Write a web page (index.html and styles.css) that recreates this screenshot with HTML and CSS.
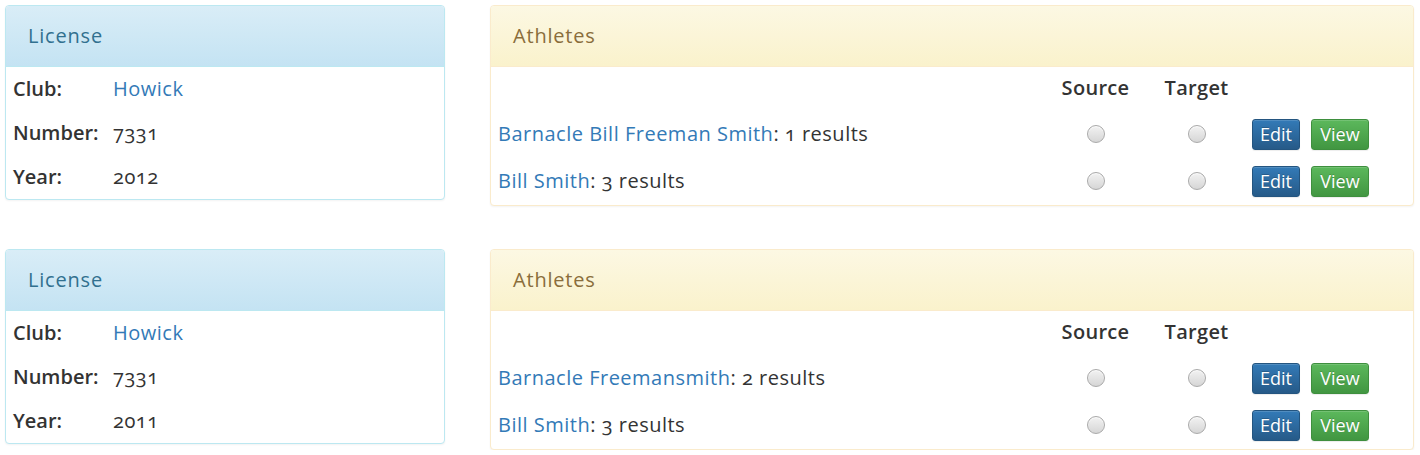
FILE: index.html
```html
<!DOCTYPE html>
<html>
<head>
<meta charset="utf-8">
<link rel="stylesheet" href="styles.css">
</head>
<body>
<div class="page">
  <div class="row">
    <div class="panel panel-info license">
      <div class="panel-heading">License</div>
      <div class="panel-body">
        <div class="kv"><span class="k">Club:</span><a class="v link" href="#">Howick</a></div>
        <div class="kv"><span class="k">Number:</span><span class="v num">7331</span></div>
        <div class="kv"><span class="k">Year:</span><span class="v num">2012</span></div>
      </div>
    </div>
    <div class="panel panel-warning athletes">
      <div class="panel-heading">Athletes</div>
      <div class="table">
        <div class="tr head">
          <div class="td name"></div>
          <div class="td radio-col">Source</div>
          <div class="td radio-col">Target</div>
          <div class="td actions"></div>
        </div>
        <div class="tr">
          <div class="td name"><a class="link" href="#">Barnacle Bill Freeman Smith</a>: <span class="num">1</span> results</div>
          <div class="td radio-col"><input type="radio" name="s1" class="radio"></div>
          <div class="td radio-col"><input type="radio" name="t1" class="radio"></div>
          <div class="td actions"><span class="btn btn-primary">Edit</span><span class="btn btn-success">View</span></div>
        </div>
        <div class="tr">
          <div class="td name"><a class="link" href="#">Bill Smith</a>: <span class="num">3</span> results</div>
          <div class="td radio-col"><input type="radio" name="s1" class="radio"></div>
          <div class="td radio-col"><input type="radio" name="t1" class="radio"></div>
          <div class="td actions"><span class="btn btn-primary">Edit</span><span class="btn btn-success">View</span></div>
        </div>
      </div>
    </div>
  </div>
  <div class="row">
    <div class="panel panel-info license">
      <div class="panel-heading">License</div>
      <div class="panel-body">
        <div class="kv"><span class="k">Club:</span><a class="v link" href="#">Howick</a></div>
        <div class="kv"><span class="k">Number:</span><span class="v num">7331</span></div>
        <div class="kv"><span class="k">Year:</span><span class="v num">2011</span></div>
      </div>
    </div>
    <div class="panel panel-warning athletes">
      <div class="panel-heading">Athletes</div>
      <div class="table">
        <div class="tr head">
          <div class="td name"></div>
          <div class="td radio-col">Source</div>
          <div class="td radio-col">Target</div>
          <div class="td actions"></div>
        </div>
        <div class="tr">
          <div class="td name"><a class="link" href="#">Barnacle Freemansmith</a>: <span class="num">2</span> results</div>
          <div class="td radio-col"><input type="radio" name="s2" class="radio"></div>
          <div class="td radio-col"><input type="radio" name="t2" class="radio"></div>
          <div class="td actions"><span class="btn btn-primary">Edit</span><span class="btn btn-success">View</span></div>
        </div>
        <div class="tr">
          <div class="td name"><a class="link" href="#">Bill Smith</a>: <span class="num">3</span> results</div>
          <div class="td radio-col"><input type="radio" name="s2" class="radio"></div>
          <div class="td radio-col"><input type="radio" name="t2" class="radio"></div>
          <div class="td actions"><span class="btn btn-primary">Edit</span><span class="btn btn-success">View</span></div>
        </div>
      </div>
    </div>
  </div>
</div>
</body>
</html>
```

FILE: styles.css
```css
* { box-sizing: border-box; }
html, body { margin: 0; padding: 0; background: #fff; }
body {
  font-family: "Open Sans", "Liberation Sans", sans-serif;
  font-size: 20px;
  color: #333;
  letter-spacing: 0.5px;
}
.page {
  padding: 5px 6px 0 5px;
  display: flex;
  flex-direction: column;
  gap: 43px;
}
.row {
  display: flex;
  align-items: flex-start;
  gap: 45px;
}
.panel {
  border: 1px solid;
  border-radius: 4px;
  box-shadow: 0 1px 2px rgba(0,0,0,.05);
  background: #fff;
  overflow: hidden;
}
.panel-heading {
  height: 61px;
  padding: 0 22px 2px;
  display: flex;
  align-items: center;
  border-bottom: 1px solid transparent;
  font-size: 20px;
  letter-spacing: 0.8px;
}
.panel-info { border-color: #bce8f1; }
.panel-info .panel-heading {
  color: #31708f;
  background: linear-gradient(to bottom, #d9edf7 0, #c4e3f3 100%);
  border-bottom-color: #bce8f1;
}
.panel-warning { border-color: #faebcc; }
.panel-warning .panel-heading {
  color: #8a6d3b;
  background: linear-gradient(to bottom, #fcf8e3 0, #faf2cc 100%);
  border-bottom-color: #faebcc;
}
.license { width: 440px; }
.athletes { width: 924px; }
.kv {
  height: 44px;
  display: flex;
  align-items: center;
  padding: 0 0 2px 7px;
}
.k { width: 100px; font-weight: 600; letter-spacing: 0; }
.num { font-variant-numeric: oldstyle-nums; font-size: 20px; }
.link { color: #337ab7; text-decoration: none; }
.table { display: flex; flex-direction: column; }
.tr {
  display: flex;
  align-items: center;
  height: 47px;
}
.td.name { flex: 1; padding: 0 0 2px 7px; }
.tr.head { height: 44px; font-weight: 600; letter-spacing: 0.3px; }
.tr.head .td { padding-bottom: 3px; }
.td.radio-col { width: 101px; display: flex; justify-content: center; }
.td.actions { width: 166px; padding-left: 5px; display: flex; gap: 11px; }
.radio {
  appearance: none;
  -webkit-appearance: none;
  margin: 0;
  width: 18px;
  height: 18px;
  border-radius: 50%;
  border: 1px solid #a9a9a9;
  background: linear-gradient(to bottom, #f2f2f2 0, #d6d6d6 100%);
  box-shadow: inset 0 1px 1px rgba(255,255,255,.8);
  position: relative;
  top: -1px;
}
.btn {
  display: inline-flex;
  align-items: center;
  justify-content: center;
  height: 31px;
  padding: 0 0 1px;
  font-size: 18px;
  letter-spacing: 0;
  color: #fff;
  border: 1px solid;
  border-radius: 3px;
  text-shadow: 0 -1px 0 rgba(0,0,0,.2);
  box-shadow: inset 0 1px 0 rgba(255,255,255,.15), 0 1px 1px rgba(0,0,0,.075);
}
.btn-primary {
  width: 48px;
  background: linear-gradient(to bottom, #337ab7 0, #265a88 100%);
  border-color: #245580;
}
.btn-success {
  width: 58px;
  background: linear-gradient(to bottom, #5cb85c 0, #419641 100%);
  border-color: #3e8f3e;
}
```
